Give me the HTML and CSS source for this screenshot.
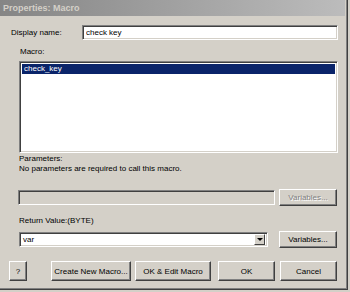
FILE: index.html
```html
<!DOCTYPE html>
<html lang="en">
<head>
    <meta charset="UTF-8">
    <title>Properties: Macro</title>
    <link rel="stylesheet" href="styles.css">
</head>
<body>
    <div class="window">
        <div class="titlebar">Properties: Macro</div>
        <div class="content">
            <div class="row-name">
                <label for="dispname">Display name:</label>
                <input type="text" id="dispname" class="field name-field" value="check key">
            </div>
            <div class="label macro-label">Macro:</div>
            <div class="field listbox">
                <div class="list-item selected">check_key</div>
            </div>
            <div class="params">
                <div>Parameters:</div>
                <div>No parameters are required to call this macro.</div>
            </div>
            <div class="row-field">
                <div class="field disabled-field"></div>
                <button class="btn btn-vars" disabled>Variables...</button>
            </div>
            <div class="label return-label">Return Value:(BYTE)</div>
            <div class="row-field row-combo">
                <div class="field combo">
                    <span class="combo-text">var</span>
                    <span class="combo-btn"><span class="arrow"></span></span>
                </div>
                <button class="btn btn-vars">Variables...</button>
            </div>
            <div class="buttons">
                <button class="btn btn-help">?</button>
                <button class="btn btn-create">Create New Macro...</button>
                <button class="btn btn-edit">OK &amp; Edit Macro</button>
                <button class="btn btn-ok">OK</button>
                <button class="btn btn-cancel">Cancel</button>
            </div>
        </div>
    </div>
</body>
</html>
```

FILE: styles.css
```css
* {
    margin: 0;
    padding: 0;
    box-sizing: border-box;
}
body {
    background: #d4d0c8;
    font-family: "Liberation Sans", Arial, sans-serif;
    font-size: 8px;
    color: #000;
}
.window {
    width: 348px;
    height: 290px;
    background: #d4d0c8;
    border-right: 1px solid #404040;
    border-bottom: 1px solid #404040;
    box-shadow: inset -1px -1px #808080;
}
.titlebar {
    height: 16px;
    line-height: 16px;
    padding-left: 3px;
    background: linear-gradient(to right, #858585, #bcbcbc);
    color: #d4d0c8;
    font-size: 9px;
    font-weight: bold;
    margin-right: 2px;
}
.field {
    background: #fff;
    border: 1px solid;
    border-color: #808080 #fff #fff #808080;
    box-shadow: inset 1px 1px #404040, inset -1px -1px #d4d0c8;
}
.row-name {
    display: flex;
    align-items: center;
    margin-top: 9px;
    height: 15px;
    padding-left: 11px;
}
.row-name label {
    width: 71px;
}
.name-field {
    width: 256px;
    height: 15px;
    padding-left: 3px;
    font-family: inherit;
    font-size: 8px;
    outline: none;
}
.label {
    height: 10px;
    line-height: 10px;
}
.macro-label {
    margin-top: 7px;
    padding-left: 20px;
}
.listbox {
    margin-top: 4px;
    margin-left: 19px;
    width: 319px;
    height: 92px;
    padding: 2px;
}
.list-item {
    height: 10px;
    line-height: 10px;
    padding-left: 2px;
}
.list-item.selected {
    background: #0a246a;
    color: #fff;
}
.params {
    margin-top: 1px;
    padding-left: 19px;
    line-height: 10px;
}
.row-field {
    display: flex;
    align-items: center;
    height: 17px;
    margin-top: 15px;
    padding-left: 18px;
}
.disabled-field {
    width: 257px;
    height: 15px;
    background: #d4d0c8;
}
.btn {
    font-family: inherit;
    font-size: 8px;
    font-weight: normal;
    color: #000;
    background: #d4d0c8;
    border: 1px solid;
    border-color: #fff #404040 #404040 #fff;
    box-shadow: inset -1px -1px #808080;
}
.btn-vars {
    width: 58px;
    height: 17px;
    margin-left: 4px;
}
.btn:disabled {
    color: #808080;
    text-shadow: 1px 1px #fff;
}
.return-label {
    margin-top: 10px;
    padding-left: 19px;
}
.row-combo {
    margin-top: 5px;
    padding-left: 19px;
}
.combo {
    display: flex;
    align-items: center;
    width: 249px;
    height: 15px;
    padding: 2px;
}
.combo-text {
    flex: 1;
    padding-left: 1px;
    line-height: 11px;
}
.combo-btn {
    display: flex;
    align-items: center;
    justify-content: center;
    width: 11px;
    height: 11px;
    background: #d4d0c8;
    border: 1px solid;
    border-color: #fff #404040 #404040 #fff;
}
.arrow {
    width: 0;
    height: 0;
    border-left: 3px solid transparent;
    border-right: 3px solid transparent;
    border-top: 3px solid #000;
}
.row-combo .btn-vars {
    margin-left: 11px;
}
.buttons {
    display: flex;
    height: 20px;
    margin-top: 13px;
    padding-left: 9px;
}
.buttons .btn {
    height: 20px;
}
.btn-help {
    width: 18px;
}
.btn-create {
    width: 80px;
    margin-left: 24px;
}
.btn-edit {
    width: 76px;
    margin-left: 4px;
}
.btn-ok {
    width: 57px;
    margin-left: 7px;
}
.btn-cancel {
    width: 57px;
    margin-left: 5px;
}
```
